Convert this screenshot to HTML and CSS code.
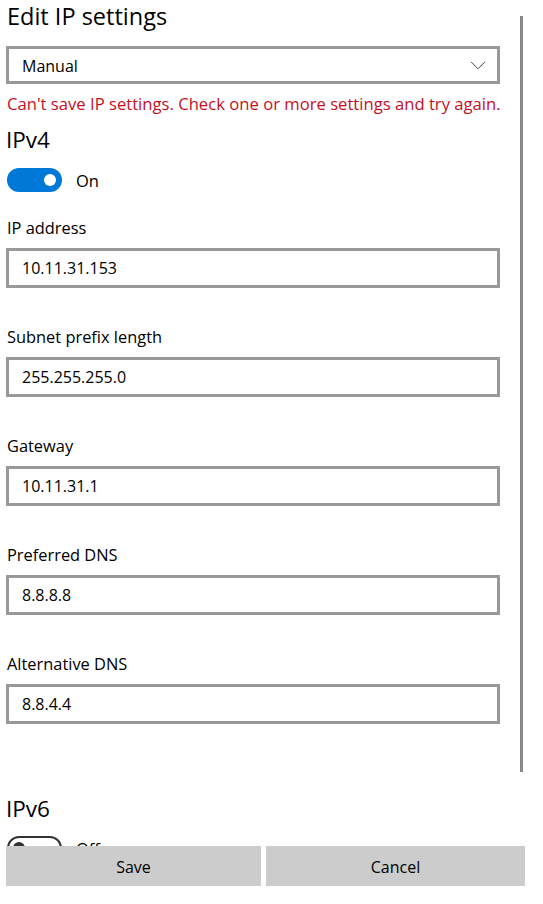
FILE: index.html
```html
<!DOCTYPE html>
<html>
<head>
<meta charset="utf-8">
<link rel="stylesheet" href="styles.css">
</head>
<body>
<div class="page">
  <h1 class="title">Edit IP settings</h1>
  <div class="select">
    <span>Manual</span>
    <svg class="chev" width="16" height="9" viewBox="0 0 16 9"><path d="M1 0.8 L8 7.8 L15 0.8" fill="none" stroke="#444" stroke-width="1"/></svg>
  </div>
  <div class="error">Can't save IP settings. Check one or more settings and try again.</div>
  <h2 class="section">IPv4</h2>
  <div class="toggle-row">
    <span class="toggle on"><span class="knob"></span></span>
    <span class="toggle-label">On</span>
  </div>
  <div class="field">
    <div class="label">IP address</div>
    <div class="input">10.11.31.153</div>
  </div>
  <div class="field">
    <div class="label">Subnet prefix length</div>
    <div class="input">255.255.255.0</div>
  </div>
  <div class="field">
    <div class="label">Gateway</div>
    <div class="input">10.11.31.1</div>
  </div>
  <div class="field">
    <div class="label">Preferred DNS</div>
    <div class="input">8.8.8.8</div>
  </div>
  <div class="field">
    <div class="label">Alternative DNS</div>
    <div class="input">8.8.4.4</div>
  </div>
  <h2 class="section v6">IPv6</h2>
  <div class="toggle-row">
    <span class="toggle off"><span class="knob"></span></span>
    <span class="toggle-label">Off</span>
  </div>
</div>
<div class="scrollbar"></div>
<div class="footer">
  <button class="btn save">Save</button>
  <button class="btn cancel">Cancel</button>
</div>
</body>
</html>
```

FILE: styles.css
```css
html, body {
  margin: 0;
  padding: 0;
  background: #fff;
  overflow: hidden;
}
body {
  font-family: "Open Sans", "Noto Sans", sans-serif;
  color: #000;
  width: 543px;
  height: 904px;
  position: relative;
}
.page {
  padding: 0 0 0 6px;
  width: 494px;
}
.title {
  margin: 0;
  font-weight: 400;
  font-size: 23.5px;
  line-height: 32px;
  padding: 0 0 0 1px;
  height: 46px;
  box-sizing: border-box;
}
.select {
  height: 38px;
  border: 3px solid #999;
  box-sizing: border-box;
  display: flex;
  align-items: center;
  justify-content: space-between;
  padding: 1px 11px 0 13px;
  font-size: 16px;
}
.chev { display: block; }
.error {
  color: #c50f1f;
  font-size: 16.65px;
  line-height: 20px;
  padding: 10px 0 0 1px;
  height: 39px;
  box-sizing: border-box;
  white-space: nowrap;
}
.section {
  margin: 0;
  font-weight: 400;
  font-size: 22.5px;
  line-height: 28px;
  height: 41px;
  padding-top: 3px;
  box-sizing: border-box;
}
.toggle-row {
  display: flex;
  align-items: center;
  height: 32px;
}
.toggle {
  width: 55px;
  height: 24px;
  border-radius: 12px;
  box-sizing: border-box;
  position: relative;
  margin-left: 1px;
  display: block;
}
.toggle.on { background: #0078d7; }
.toggle.on .knob {
  position: absolute;
  width: 12px;
  height: 12px;
  border-radius: 50%;
  background: #fff;
  right: 6px;
  top: 6px;
}
.toggle.off { border: 2px solid #333; }
.toggle.off .knob {
  position: absolute;
  width: 12px;
  height: 12px;
  border-radius: 50%;
  background: #333;
  left: 4px;
  top: 4px;
}
.toggle-label {
  font-size: 16.5px;
  margin-left: 14px;
}
.field {
  height: 109px;
  padding-top: 22px;
  box-sizing: border-box;
}
.label {
  font-size: 16.4px;
  line-height: 20px;
  height: 30px;
  padding-left: 1px;
}
.input {
  height: 40px;
  border: 3px solid #999;
  box-sizing: border-box;
  display: flex;
  align-items: center;
  padding-left: 13px;
  font-size: 16px;
}
.section.v6 {
  margin-top: 51px;
  height: 40px;
}
.scrollbar {
  position: absolute;
  left: 520px;
  top: 16px;
  width: 3px;
  height: 756px;
  background: #888;
}
.footer {
  position: absolute;
  left: 0;
  top: 846px;
  width: 543px;
  height: 58px;
  background: #fff;
  display: flex;
  gap: 5px;
  padding-left: 6px;
  box-sizing: border-box;
  align-items: flex-start;
}
.btn {
  height: 40px;
  border: none;
  background: #ccc;
  font-family: "Open Sans", "Noto Sans", sans-serif;
  font-size: 16px;
  color: #000;
  padding: 1px 0 0;
}
.save { width: 255px; }
.cancel { width: 259px; }
```
